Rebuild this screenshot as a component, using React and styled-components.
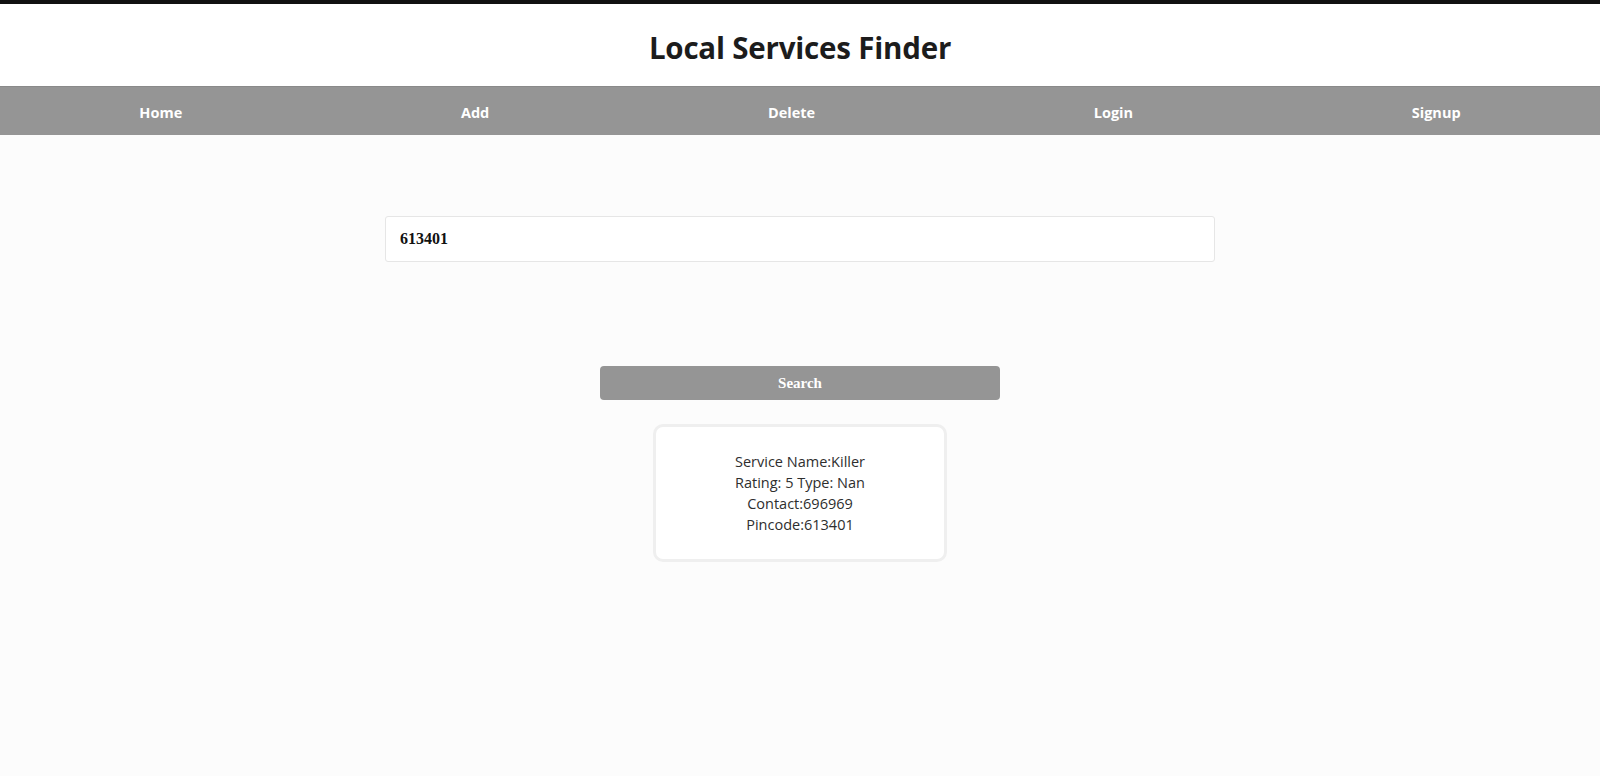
import React from 'react';
import styled, { createGlobalStyle } from 'styled-components';

const GlobalStyle = createGlobalStyle`
  body {
    margin: 0;
    background: #fcfcfc;
    font-family: "Open Sans", "Noto Sans", sans-serif;
  }
`;

const Page = styled.div`
  min-height: 776px;
  border-top: 4px solid #111;
  box-sizing: border-box;
`;

const Header = styled.header`
  background: #fff;
  height: 82px;
  box-sizing: border-box;
  padding-top: 4px;
  display: flex;
  align-items: center;
  justify-content: center;
`;

const Title = styled.h1`
  margin: 0;
  font-size: 29.5px;
  font-weight: 700;
  color: #1c1c1c;
  letter-spacing: -0.2px;
`;

const Nav = styled.nav`
  background: #959595;
  height: 49px;
  border-top: 1px solid #8a8a8a;
  box-sizing: border-box;
  padding-top: 2px;
  display: flex;
  align-items: center;
  justify-content: space-around;
`;

const NavItem = styled.a`
  color: #fff;
  font-weight: 700;
  font-size: 14.5px;
  text-decoration: none;
`;

const Main = styled.main`
  display: flex;
  flex-direction: column;
  align-items: center;
  padding-top: 81px;
`;

const SearchInput = styled.input`
  width: 830px;
  height: 46px;
  box-sizing: border-box;
  border: 1px solid #e6e6e6;
  border-radius: 3px;
  background: #fff;
  padding: 0 14px;
  font-family: "Liberation Serif", serif;
  font-weight: 700;
  font-size: 16px;
  color: #111;
  outline: none;
`;

const SearchButton = styled.button`
  margin-top: 104px;
  width: 400px;
  height: 34px;
  border: none;
  border-radius: 4px;
  background: #959595;
  color: #fff;
  font-family: "Liberation Serif", serif;
  font-weight: 700;
  font-size: 15px;
  cursor: pointer;
`;

const ResultCard = styled.div`
  margin-top: 24px;
  width: 294px;
  height: 138px;
  box-sizing: border-box;
  border: 3px solid #efefef;
  border-radius: 10px;
  background: #fff;
  display: flex;
  flex-direction: column;
  align-items: center;
  justify-content: center;
  font-size: 14.5px;
  line-height: 21px;
  color: #2e2e2e;
`;

const links = ['Home', 'Add', 'Delete', 'Login', 'Signup'];

const App = () => {
  return (
    <Page>
      <GlobalStyle />
      <Header>
        <Title>Local Services Finder</Title>
      </Header>
      <Nav>
        {links.map(link => (
          <NavItem key={link} href="#">{link}</NavItem>
        ))}
      </Nav>
      <Main>
        <SearchInput defaultValue="613401" />
        <SearchButton>Search</SearchButton>
        <ResultCard>
          <div>Service Name:Killer</div>
          <div>Rating: 5 Type: Nan</div>
          <div>Contact:696969</div>
          <div>Pincode:613401</div>
        </ResultCard>
      </Main>
    </Page>
  );
};

export default App;
